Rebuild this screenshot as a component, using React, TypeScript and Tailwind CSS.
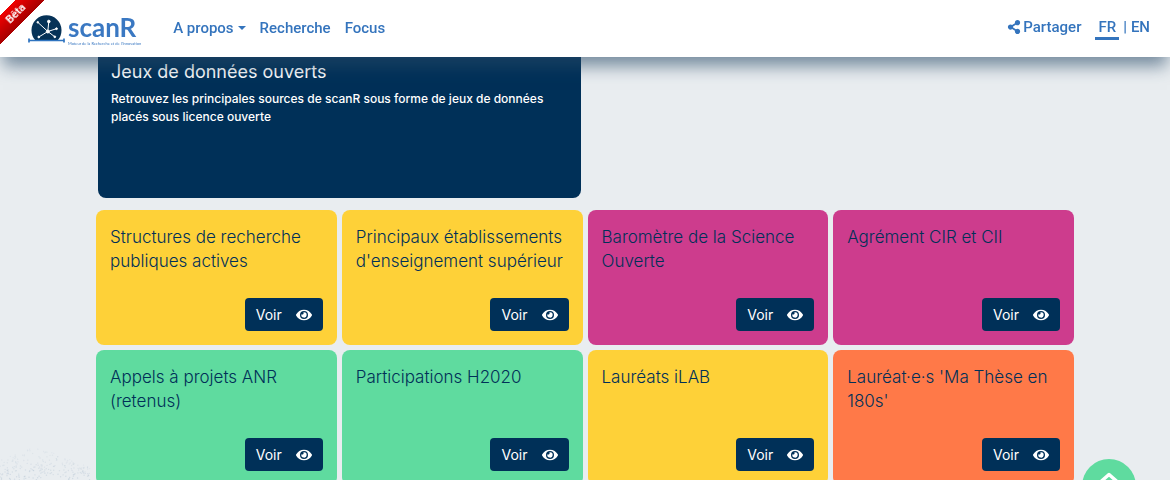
import React from 'react';
import { FaEye, FaShareAlt } from 'react-icons/fa';

interface Dataset {
  title: string;
  color: string;
}

const datasets: Dataset[] = [
  { title: 'Structures de recherche publiques actives', color: 'bg-[#fed138]' },
  { title: "Principaux établissements d'enseignement supérieur", color: 'bg-[#fed138]' },
  { title: 'Baromètre de la Science Ouverte', color: 'bg-[#cd3c8d]' },
  { title: 'Agrément CIR et CII', color: 'bg-[#cd3c8d]' },
  { title: 'Appels à projets ANR (retenus)', color: 'bg-[#5fdb9f]' },
  { title: 'Participations H2020', color: 'bg-[#5fdb9f]' },
  { title: 'Lauréats iLAB', color: 'bg-[#fed138]' },
  { title: "Lauréat·e·s 'Ma Thèse en 180s'", color: 'bg-[#ff7948]' },
];

const LogoMark = () => (
  <svg viewBox="0 0 37 28" className="h-7 w-[37px]" aria-hidden="true">
    <path d="M7.3 25.3A15 15 0 1 1 29.7 25.3Z" fill="#063257" />
    <g stroke="#fff" strokeWidth="1" fill="#fff">
      <path d="M19.8 16.5 20.8 6.5M19.8 16.5 9.8 7.3M19.8 16.5 28.5 13.7M19.8 16.5 10.8 22M19.8 16.5 26.8 21.8" />
      <circle cx="19.8" cy="16.5" r="1.5" />
      <circle cx="20.8" cy="6.5" r="1.3" />
      <circle cx="9.8" cy="7.3" r=".8" />
      <circle cx="28.5" cy="13.7" r=".9" />
      <circle cx="10.8" cy="22" r=".9" />
      <circle cx="26.8" cy="21.8" r=".9" />
    </g>
    <path d="M.5 25.5H36.5M1 23.5V27.5M36 23.5V27.5" stroke="#2f74c0" strokeWidth="1.7" />
  </svg>
);

const Logo = () => (
  <a href="#accueil" className="flex items-center text-[#3a78c2]">
    <LogoMark />
    <span className="ml-[3px] flex flex-col font-['Lato'] font-bold">
      <span className="text-[26px] leading-[30px]">scanR</span>
      <span className="text-[4px] leading-1 font-normal">Moteur de la Recherche et de l'Innovation</span>
    </span>
  </a>
);

const BetaRibbon = () => (
  <div className="absolute top-0 left-0 size-14 overflow-hidden">
    <span className="absolute top-1 -left-8 w-24 -rotate-45 bg-linear-to-b from-[#f00000] to-[#a80000] text-center text-[11px] leading-5 font-bold text-white">
      Bêta
    </span>
  </div>
);

const Header = () => (
  <header className="sticky top-0 z-10 flex h-[57px] items-center bg-white pr-5 pl-7 font-['Roboto',sans-serif] text-[15px] leading-5 font-medium text-[#3474bd] shadow-[0_12px_16px_-3px_rgba(40,73,104,0.6)]">
    <BetaRibbon />
    <Logo />
    <nav className="ml-8 flex gap-3.5 pb-0.5">
      <button type="button" className="flex items-center gap-1">
        A propos
        <span className="border-x-4 border-t-4 border-x-transparent border-t-current"></span>
      </button>
      <a href="#recherche">Recherche</a>
      <a href="#focus">Focus</a>
    </nav>
    <div className="ml-auto flex items-center gap-3.5 pb-1">
      <button type="button" className="flex items-center gap-0.5">
        <FaShareAlt className="size-3.5" />
        Partager
      </button>
      <div className="flex gap-1">
        <a href="#fr" className="relative px-[3px]">
          FR
          <span className="absolute inset-x-0 top-full h-[3px] bg-current"></span>
        </a>
        <span>|</span>
        <a href="#en">EN</a>
      </div>
    </div>
  </header>
);

const DatasetCard: React.FC<{ dataset: Dataset }> = ({ dataset }) => (
  <article className={`${dataset.color} flex h-[135px] flex-col rounded-lg p-3.5 pt-[15px]`}>
    <h3 className="text-[17px] leading-6 font-light text-[#003058]">{dataset.title}</h3>
    <button type="button" className="mt-auto flex h-[33px] items-center gap-3.5 self-end rounded-sm bg-[#003058] px-[11px] text-sm text-white">
      Voir
      <FaEye className="size-4" />
    </button>
  </article>
);

const noise = (n: number) => {
  const value = Math.sin(n * 12.9898) * 43758.5453;
  return value - Math.floor(value);
};

// Faint cloud of dots in the lower left corner of the page
const Speckles = () => (
  <svg viewBox="0 0 96 40" className="absolute bottom-0 left-0 h-10 w-24" aria-hidden="true">
    {Array.from({ length: 220 }, (_, i) => {
      const x = noise(i + 1) * 90;
      const depth = noise(i + 501);
      const height = 34 - Math.abs(x - 36) * 0.4;
      return <circle key={i} cx={x} cy={40 - height * depth} r=".7" fill="#8aa3bd" opacity={0.26 - depth * 0.18} />;
    })}
  </svg>
);

export default function App() {
  return (
    <div className="relative h-screen overflow-hidden bg-[#e9edf0] font-['Inter',sans-serif]">
      <Header />
      <Speckles />
      <main className="relative px-24">
        <section className="grid grid-cols-2">
          <div className="mr-1 ml-0.5 h-[141px] rounded-b-lg bg-[#003058] px-[13px] pt-[3px] text-white">
            <h2 className="text-lg leading-6 font-normal">Jeux de données ouverts</h2>
            <p className="mt-1.5 text-xs leading-[18px] font-medium">
              Retrouvez les principales sources de scanR sous forme de jeux de données placés sous licence ouverte
            </p>
          </div>
        </section>
        <section className="mt-3 grid grid-cols-4 gap-[5px]">
          {datasets.map((dataset) => (
            <DatasetCard key={dataset.title} dataset={dataset} />
          ))}
        </section>
      </main>
      <button type="button" aria-label="Haut de page" className="fixed right-[34px] -bottom-[33px] flex size-[54px] justify-center rounded-full bg-[#5fdb9f] pt-3 text-white">
        <svg viewBox="0 0 28 28" className="size-7" fill="none" stroke="currentColor" strokeWidth="3.5" strokeLinejoin="round" strokeLinecap="round">
          <path d="M2 14 14 3.5 26 14" />
        </svg>
      </button>
    </div>
  );
}
